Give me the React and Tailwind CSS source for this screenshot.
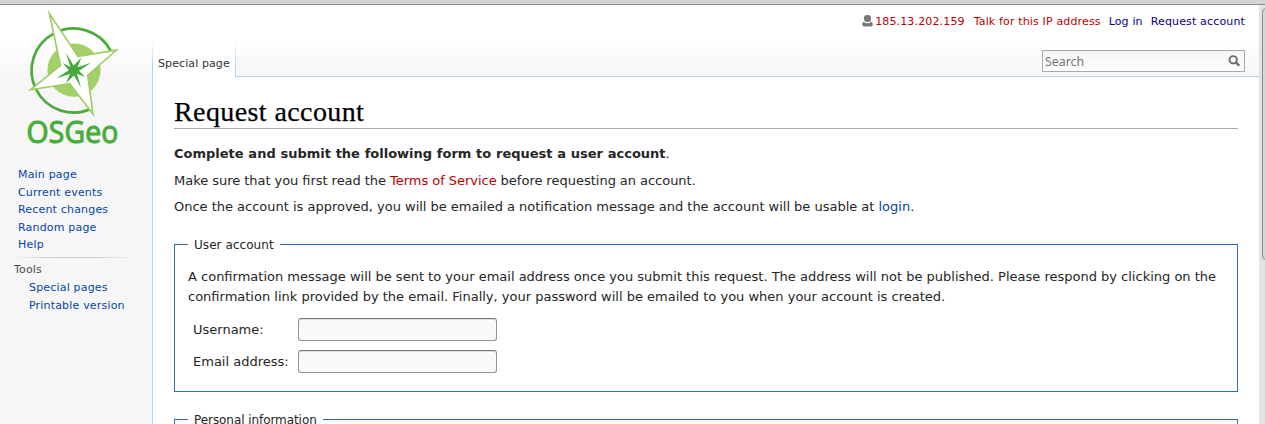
import React from "react";

const navLinks = ["Main page", "Current events", "Recent changes", "Random page", "Help"];
const toolLinks = ["Special pages", "Printable version"];

function Logo() {
  return (
    <svg className="block h-[150px] w-[152px]" viewBox="0 5 152 150">
      <path d="M92 108.3 A42 42 0 1 1 110.5 50.5" fill="none" stroke="#4bac3c" strokeWidth="2.7" />
      <circle cx="74" cy="70.2" r="26.6" fill="#a3d069" />
      <path d="M49.3 13.5 L78 56.5 L116.5 50.1 L87.7 75.2 L93 114 L69.7 83.5 L30.5 89.8 L60.5 65.5 Z" fill="#fff" stroke="#9bce60" strokeWidth="1.6" strokeMiterlimit="6" />
      <path d="M66 52.7 L73.5 65.5 L81.3 57.8 L77.5 67.2 L91 62.7 L79 70.8 L85 77 L77 73.8 L81 87.8 L74 75.6 L66 83 L70 74 L56.3 78.3 L68.8 70.2 L62.7 63 L70.4 67 Z" fill="#45a93d" />
      <text x="26.5" y="142.7" fill="#4bac3c" stroke="#4bac3c" strokeWidth="1.1" fontFamily="Open Sans, sans-serif" fontSize="30.5" textLength="92" lengthAdjust="spacingAndGlyphs">OSGeo</text>
    </svg>
  );
}

function Sidebar() {
  return (
    <aside className="w-[152px] shrink-0 bg-[linear-gradient(to_bottom,#fff_35px,#f6f6f6_75px)] text-[11px] tracking-[0.18px] text-[#0645ad]">
      <div className="h-[161px]">
        <Logo />
      </div>
      <nav className="pl-[18px]">
        {navLinks.map((t) => (
          <a key={t} className="block h-[17.6px] leading-[18px]">{t}</a>
        ))}
      </nav>
      <div className="ml-3 mt-[3px] h-px w-[124px] bg-[linear-gradient(to_right,transparent,#ccc_33%,#ccc_66%,transparent)]" />
      <h3 className="mt-[3px] h-[18px] pl-[14px] leading-[18px] text-[#4d4d4d]">Tools</h3>
      <nav className="pl-[29px]">
        {toolLinks.map((t) => (
          <a key={t} className="block h-[18px] leading-[18px]">{t}</a>
        ))}
      </nav>
    </aside>
  );
}

function Header() {
  return (
    <header className="relative z-10 flex h-[71px] justify-between bg-[linear-gradient(to_bottom,#fff_35px,#f6f6f6_71px)]">
      <div className="-mb-px flex w-[84px] flex-col">
        <div className="h-[35px]" />
        <div className="flex grow">
          <div className="w-px bg-linear-to-b from-white to-[#a7d7f9] to-70%" />
          <div className="grow bg-white pl-[5px] pt-[15px] text-[11px] leading-[18px] tracking-[0.1px] whitespace-nowrap text-[#333]">Special page</div>
          <div className="w-px bg-linear-to-b from-white to-[#a7d7f9] to-70%" />
        </div>
      </div>
      <div className="flex flex-col items-end pr-[14px]">
        <div className="mt-[8px] flex h-[18px] text-[11px] leading-[18px] tracking-[0.15px] whitespace-nowrap">
          <svg className="mr-[2px] mt-[2px] h-[12px] w-[11px]" viewBox="0 0 11 12" fill="#777">
            <rect x="2" y="0" width="7" height="7" rx="3" />
            <path d="M1.4 6.8 Q5.5 9.8 9.6 6.8 Q10.8 7.6 10.8 9.7 Q10.8 11.5 8.5 11.5 H2.5 Q.2 11.5 .2 9.7 Q.2 7.6 1.4 6.8Z" />
          </svg>
          <a className="mr-[9px] text-[#ba0000]">185.13.202.159</a>
          <a className="mr-[8px] text-[#ba0000]">Talk for this IP address</a>
          <a className="mr-[8px] text-[#0b0080]">Log in</a>
          <a className="text-[#0b0080]">Request account</a>
        </div>
        <div className="mt-[19px] flex h-[22px] w-[203px] justify-between border border-[#aaa] bg-linear-to-b from-[#f5f5f5] to-white pl-[2px] pr-[4px] font-['Noto_Sans',sans-serif] text-[12.4px] leading-[21px] text-[#757575]">
          <span>Search</span>
          <svg className="mt-[4px] h-[12px] w-[12px]" viewBox="0 0 12 12" fill="none" stroke="#6b6b6b">
            <circle cx="5.2" cy="4.8" r="3.7" strokeWidth="1.9" />
            <path d="M7.8 7.4 L11.2 10.7" strokeWidth="2.3" />
          </svg>
        </div>
      </div>
    </header>
  );
}

function Field({ label }) {
  return (
    <label className="flex h-[32px] items-start">
      <span className="w-[110px] pl-[5px] pt-[6px]">{label}</span>
      <input className="mt-[4px] h-[23px] w-[199px] rounded-[3px] border border-[#949494] border-t-[#777] bg-[#fafafa] shadow-[inset_0_1px_0_#ddd]" />
    </label>
  );
}

function Content() {
  return (
    <main className="h-[348px] overflow-hidden border-l border-t border-[#a7d7f9] bg-white pl-[21px] pr-[21px] text-[13px] leading-[20px] whitespace-nowrap text-[#252525]">
      <h1 className="mt-[14px] h-[38px] border-b border-[#aaa] font-['Liberation_Serif',serif] text-[28px] leading-[42px] tracking-[0.4px] text-black [-webkit-text-stroke:0.25px_black]">Request account</h1>
      <p className="mt-[15px] [word-spacing:0.2px]"><b>Complete and submit the following form to request a user account</b>.</p>
      <p className="mt-[7px] [word-spacing:-0.22px]">Make sure that you first read the <a className="text-[#ba0000]">Terms of Service</a> before requesting an account.</p>
      <p className="mt-[6px] [word-spacing:-0.06px]">Once the account is approved, you will be emailed a notification message and the account will be usable at <a className="text-[#0645ad]">login</a>.</p>
      <fieldset className="mt-[18px] h-[157px] border border-[#2f6fab] px-[13px]">
        <legend className="h-[19px] px-[6px] text-[12px] tracking-[0.06px]">User account</legend>
        <p className="mt-[13px]">
          A confirmation message will be sent to your email address once you submit this request. The address will not be published. Please respond by clicking on the
          <br />
          confirmation link provided by the email. Finally, your password will be emailed to you when your account is created.
        </p>
        <div className="mt-[7px]">
          <Field label="Username:" />
          <Field label="Email address:" />
        </div>
      </fieldset>
      <fieldset className="mt-[18px] h-[100px] border border-[#2f6fab] px-[13px]">
        <legend className="h-[19px] px-[6px] text-[12px] tracking-[-0.07px]">Personal information</legend>
      </fieldset>
    </main>
  );
}

export default function App() {
  return (
    <div className="h-[424px] w-[1265px] overflow-hidden bg-white font-['DejaVu_Sans',sans-serif]">
      <div className="h-[5px] border-b border-[#8c8c8c] bg-[#d4d4d4]" />
      <div className="flex h-[419px]">
        <Sidebar />
        <div className="w-[1107px] shrink-0">
          <Header />
          <Content />
        </div>
        <div className="w-[6px] overflow-hidden bg-[#e2e2e2] pl-[3px] pt-[3px]">
          <div className="h-[252px] w-[12px] rounded-[4px] border border-[#8c8c8c] bg-[#d6d6d6]" />
        </div>
      </div>
    </div>
  );
}
